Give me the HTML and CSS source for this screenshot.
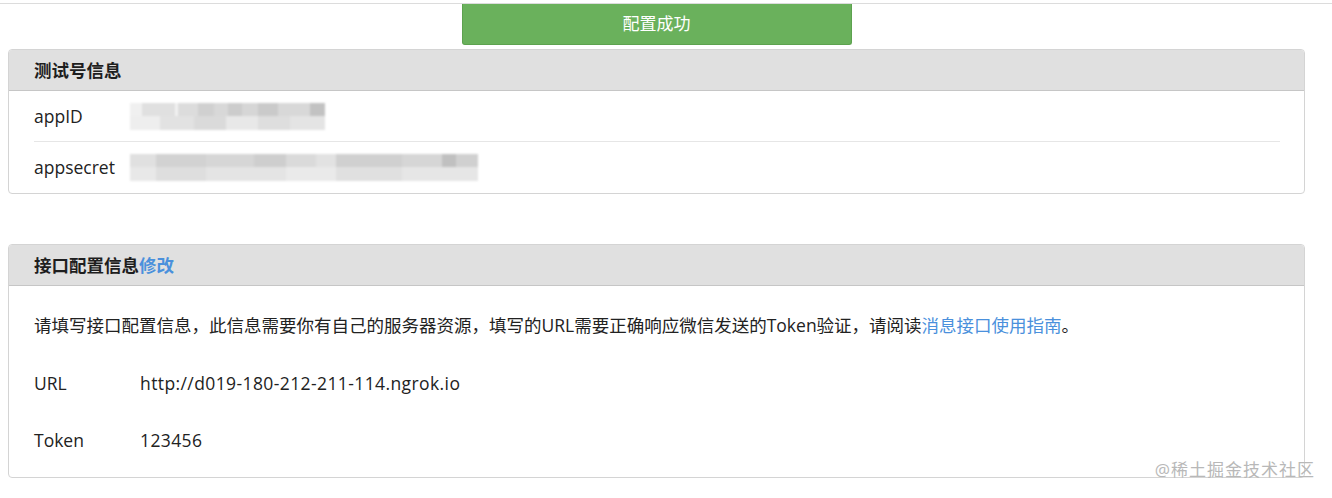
FILE: index.html
```html
<!DOCTYPE html>
<html lang="zh-CN">
  <head>
    <meta charset="UTF-8" />
    <meta name="viewport" content="width=device-width, initial-scale=1.0" />
    <title>测试号管理</title>
    <link rel="stylesheet" href="styles.css">
  </head>

  <body>
    <div class="top-line"></div>

    <div class="page">
      <div class="status-row">
        <div class="status-btn">配置成功</div>
      </div>

      <div class="panel">
        <div class="panel-head">测试号信息</div>
        <div class="panel-body info-body">
          <div class="info-row">
            <span class="info-label">appID</span>
            <span class="mosaic mosaic-short"></span>
          </div>
          <div class="info-row">
            <span class="info-label">appsecret</span>
            <span class="mosaic mosaic-long"></span>
          </div>
        </div>
      </div>

      <div class="panel panel-config">
        <div class="panel-head">接口配置信息<a class="link" href="#">修改</a></div>
        <div class="panel-body config-body">
          <p class="config-row">请填写接口配置信息，此信息需要你有自己的服务器资源，填写的URL需要正确响应微信发送的Token验证，请阅读<a class="link" href="#">消息接口使用指南</a>。</p>
          <div class="config-row">
            <span class="config-label">URL</span>
            <span class="config-value">http://d019-180-212-211-114.ngrok.io</span>
          </div>
          <div class="config-row">
            <span class="config-label">Token</span>
            <span class="config-value">123456</span>
          </div>
        </div>
        <div class="watermark">@稀土掘金技术社区</div>
      </div>
    </div>
  </body>
</html>
```

FILE: styles.css
```css
body {
  margin: 0;
  padding-top: 3px;
  font-family: "Open Sans", "Noto Sans CJK SC", sans-serif;
  font-size: 17.5px;
  color: #222;
  background-color: #fff;
}

.top-line {
  border-top: 1px solid #dcdcdc;
}

.page {
  width: 1297px;
  margin-left: 8px;
}

.status-row {
  display: flex;
  justify-content: center;
}

.status-btn {
  width: 388px;
  height: 40px;
  line-height: 40px;
  text-align: center;
  color: #fff;
  background-color: #6ab15c;
  border: 1px solid #5da24f;
  border-top: none;
  border-radius: 0 0 3px 3px;
  font-size: 17px;
}

.panel {
  position: relative;
  margin-top: 4px;
  border: 1px solid #d4d4d4;
  border-radius: 4px;
}

.panel-config {
  margin-top: 50px;
}

.panel-head {
  height: 40px;
  line-height: 40px;
  padding: 0 25px;
  background-color: #e0e0e0;
  border-bottom: 1px solid #c6c6c6;
  border-radius: 3px 3px 0 0;
  font-weight: bold;
  color: #1e1e1e;
}

.link {
  color: #4a90dc;
  text-decoration: none;
}

.info-body {
  padding: 0 24px 1px 25px;
}

.info-row {
  display: flex;
  align-items: center;
  height: 50px;
}

.info-row + .info-row {
  border-top: 1px solid #e6e6e6;
}

.info-label {
  width: 96px;
}

.mosaic {
  height: 27px;
  filter: blur(1px);
}

.mosaic-short {
  width: 195px;
  background:
    linear-gradient(90deg, #f0f0f0 0 12px, #e0e0e0 12px 45px, #f2f2f2 45px 48px, #dcdcdc 48px 68px, #d0d0d0 68px 84px, #d8d8d8 84px 98px, #cccccc 98px 112px, #d6d6d6 112px 128px, #cacaca 128px 148px, #d8d8d8 148px 180px, #c2c2c2 180px 195px) top / 100% 13px no-repeat,
    linear-gradient(90deg, #eeeeee 0 30px, #e2e2e2 30px 64px, #dadada 64px 96px, #e8e8e8 96px 128px, #dedede 128px 160px, #e4e4e4 160px 195px) bottom / 100% 14px no-repeat;
}

.mosaic-long {
  width: 348px;
  background:
    linear-gradient(90deg, #e0e0e0 0 26px, #d2d2d2 26px 76px, #d6d6d6 76px 124px, #cecece 124px 156px, #dadada 156px 186px, #e2e2e2 186px 206px, #d0d0d0 206px 272px, #d6d6d6 272px 312px, #c0c0c0 312px 326px, #d0d0d0 326px 348px) top / 100% 13px no-repeat,
    linear-gradient(90deg, #e8e8e8 0 26px, #dedede 26px 76px, #e4e4e4 76px 156px, #eaeaea 156px 206px, #e0e0e0 206px 272px, #e6e6e6 272px 348px) bottom / 100% 14px no-repeat;
}

.config-body {
  padding: 11px 25px 9px;
}

.config-row {
  display: flex;
  align-items: center;
  height: 57px;
  margin: 0;
}

p.config-row {
  display: block;
  line-height: 57px;
}

.config-label {
  width: 106px;
}

.config-value {
  letter-spacing: 0.4px;
}

.watermark {
  position: absolute;
  right: -11px;
  bottom: -4px;
  font-size: 17px;
  color: #b8b8b8;
  letter-spacing: 1px;
}
```
